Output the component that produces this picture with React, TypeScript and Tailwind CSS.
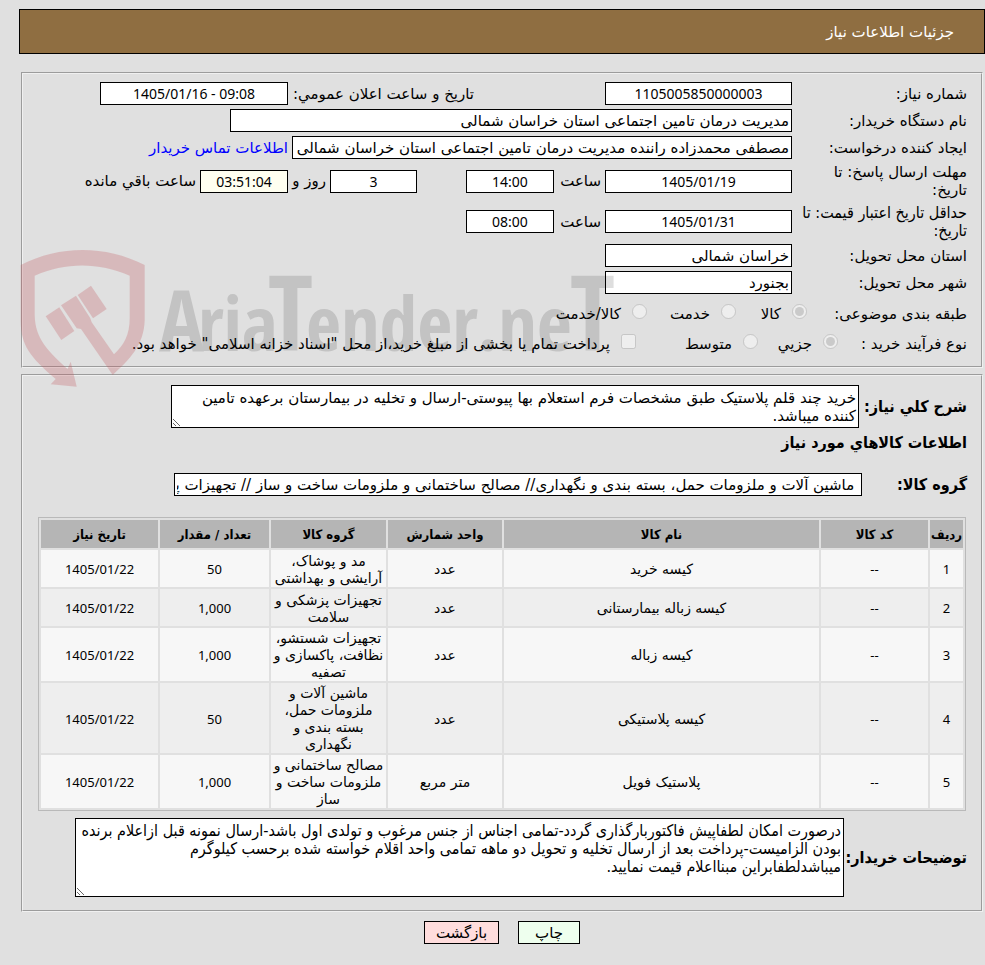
import type { ReactNode } from 'react';

const numeric = "font-['Noto_Sans','DejaVu_Sans',sans-serif] text-[14px] text-center";

type FieldProps = { id: string; label: string; value: string; className: string };

function Box({ id, label, value, className }: FieldProps) {
  return (
    <input
      id={id}
      aria-label={label}
      readOnly
      defaultValue={value}
      className={`h-[23px] shrink-0 border border-black px-[2px] ${className}`}
    />
  );
}

type RowProps = { id: string; label: ReactNode; labelClass?: string; children: ReactNode };

function Row({ id, label, labelClass = '', children }: RowProps) {
  return (
    <div className="flex items-center gap-1">
      <label htmlFor={id} className={`w-[171px] shrink-0 ${labelClass}`}>
        {label}
      </label>
      {children}
    </div>
  );
}

type ChoiceProps = { type: 'radio' | 'checkbox'; name: string; label: string; checked?: boolean; className?: string };

function Choice({ type, name, label, checked, className = '' }: ChoiceProps) {
  return (
    <label className={`flex shrink-0 items-center gap-[11px] whitespace-nowrap ${className}`}>
      <input type={type} name={name} disabled defaultChecked={checked} className="mb-[6px] size-[15px]" />
      {label}
    </label>
  );
}

const items = [
  { name: 'کیسه خرید', unit: 'عدد', group: 'مد و پوشاک، آرایشی و بهداشتی', qty: '50' },
  { name: 'کیسه زباله بیمارستانی', unit: 'عدد', group: 'تجهیزات پزشکی و سلامت', qty: '1,000' },
  { name: 'کیسه زباله', unit: 'عدد', group: 'تجهیزات شستشو، نظافت، پاکسازی و تصفیه', qty: '1,000' },
  { name: 'کیسه پلاستیکی', unit: 'عدد', group: 'ماشین آلات و ملزومات حمل، بسته بندی و نگهداری', qty: '50' },
  { name: 'پلاستیک فویل', unit: 'متر مربع', group: 'مصالح ساختمانی و ملزومات ساخت و ساز', qty: '1,000' },
];

const num = "font-['Noto_Sans','DejaVu_Sans',sans-serif] text-[13px] pt-[2px]";

function Watermark() {
  return (
    <svg
      aria-hidden="true"
      viewBox="0 0 600 142"
      className="pointer-events-none absolute top-[247px] left-[20px] h-[142px] w-[600px] overflow-visible"
    >
      <g fill="#c2575d" fillOpacity="0.28">
        <path d="M0.700 18 C40 -2 85 -2 124.700 18 V73 C124 98 110 112 92.700 128 L61 82 L56.700 81.300 L41 58.300 L56 48.700 L70.300 71.300 L71.700 75.300 L94 107.300 C104 98 109.700 88 109.700 71 V28.700 C78 15 46 15 14.700 28.700 V68 C15 92 29 105 47.500 122 L50.700 114.700 L56.700 139.700 L30.700 137.300 L35.700 132 C10 110 0.700 98 0.700 74 Z" />
        <path d="M25.700 69.300 L39.300 60.300 L54.300 84 L41.300 93 Z" />
        <path d="M57.700 48 L71 38.700 L86.700 62 L73 71.300 Z" />
      </g>
      <text
        y="104"
        direction="ltr"
        opacity="0.13"
        className="font-['Open_Sans_Condensed','Roboto_Condensed','Noto_Sans',sans-serif] text-[76px] font-bold"
      >
        <tspan x="139" className="text-[84px]">A</tspan>
        <tspan x="178">ria</tspan>
        <tspan x="248" className="text-[104px]">T</tspan>
        <tspan x="286">ender.ne</tspan>
        <tspan x="550" className="text-[104px]">T</tspan>
      </text>
    </svg>
  );
}

const panel = 'border-2 border-[#f0f0f0] [border-style:groove] pr-[14px] pl-[15px]';
const area = 'block shrink-0 border border-black bg-white px-[2px] py-[3px] leading-[18px]';
const condensed = "font-['DejaVu_Sans_Condensed','DejaVu_Sans',sans-serif] text-[16px]";
const strong = `${condensed} font-bold whitespace-nowrap shrink-0`;

export default function App() {
  return (
    <div
      dir="rtl"
      className="relative min-h-screen bg-[#e0e0e0] pt-[9px] pl-[19px] font-['DejaVu_Sans',sans-serif] text-[15px] leading-[18px] text-black"
    >
      <header className="flex h-[45px] items-center border border-black bg-[#8f6e41] px-[30px] text-white">
        <h1>جزئیات اطلاعات نیاز</h1>
      </header>

      <main className="mt-[18px] px-[2px]">
        <fieldset className={`${panel} pt-2 pb-[6px]`}>
          <div className="flex flex-col gap-1">
            <Row id="no" label="شماره نیاز:">
              <Box id="no" label="شماره نیاز" value="1105005850000003" className={`w-[187px] bg-white ${numeric}`} />
              <label htmlFor="announce" className="mr-[127px] w-[182px] shrink-0 whitespace-nowrap">
                تاریخ و ساعت اعلان عمومي:
              </label>
              <Box id="announce" label="تاریخ و ساعت اعلان عمومي" value="1405/01/16 - 09:08" className={`w-[188px] bg-white [direction:ltr] ${numeric}`} />
            </Row>
            <Row id="org" label="نام دستگاه خریدار:">
              <Box id="org" label="نام دستگاه خریدار" value="مدیریت درمان تامین اجتماعی استان خراسان شمالی" className="w-[562px] bg-white" />
            </Row>
            <Row id="creator" label="ایجاد کننده درخواست:">
              <Box id="creator" label="ایجاد کننده درخواست" value="مصطفی محمدزاده راننده مدیریت درمان تامین اجتماعی استان خراسان شمالی" className="w-[500px] bg-white" />
              <a href="#contact" className="whitespace-nowrap text-[#0000ff]">
                اطلاعات تماس خریدار
              </a>
            </Row>
            <Row id="deadline" label={<>مهلت ارسال پاسخ: تا<br />تاریخ:</>}>
              <Box id="deadline" label="تاریخ مهلت" value="1405/01/19" className={`w-[187px] bg-white ${numeric}`} />
              <label htmlFor="deadlineTime" className="w-[43px] shrink-0">ساعت</label>
              <Box id="deadlineTime" label="ساعت" value="14:00" className={`w-[88px] bg-white ${numeric}`} />
              <Box id="days" label="روز" value="3" className={`mr-[45px] w-[87px] bg-white ${numeric}`} />
              <label htmlFor="days" className="w-[34px] shrink-0 whitespace-nowrap">روز و</label>
              <Box id="remain" label="ساعت باقي مانده" value="03:51:04" className={`w-[88px] bg-[#fffff0] ${numeric}`} />
              <label htmlFor="remain" className="whitespace-nowrap">ساعت باقي مانده</label>
            </Row>
            <Row id="valid" labelClass={`pt-px whitespace-nowrap ${condensed}`} label={<>حداقل تاریخ اعتبار قیمت: تا<br />تاریخ:</>}>
              <Box id="valid" label="تاریخ اعتبار" value="1405/01/31" className={`w-[187px] bg-white ${numeric}`} />
              <label htmlFor="validTime" className="w-[43px] shrink-0">ساعت</label>
              <Box id="validTime" label="ساعت" value="08:00" className={`w-[88px] bg-white ${numeric}`} />
            </Row>
            <Row id="province" label="استان محل تحویل:">
              <Box id="province" label="استان محل تحویل" value="خراسان شمالی" className="w-[187px] bg-white" />
            </Row>
            <Row id="city" label="شهر محل تحویل:">
              <Box id="city" label="شهر محل تحویل" value="بجنورد" className="w-[187px] bg-white" />
            </Row>
          </div>
          <div role="group" aria-label="طبقه بندی موضوعی" className="mt-[5px] flex h-[30px] items-center">
            <span className="w-[160px] shrink-0">طبقه بندی موضوعی:</span>
            <Choice type="radio" name="kind" label="کالا" checked className="w-[71px]" />
            <Choice type="radio" name="kind" label="خدمت" className="w-[89px]" />
            <Choice type="radio" name="kind" label="کالا/خدمت" />
          </div>
          <div role="group" aria-label="نوع فرآیند خرید" className="mb-px flex h-[30px] items-center">
            <span className="w-[129px] shrink-0">نوع فرآیند خرید :</span>
            <Choice type="radio" name="process" label="جزيي" checked className="w-[80px]" />
            <Choice type="radio" name="process" label="متوسط" className="w-[122px]" />
            <Choice type="checkbox" name="treasury" label={'پرداخت تمام یا بخشی از مبلغ خرید،از محل "اسناد خزانه اسلامی" خواهد بود.'} />
          </div>
        </fieldset>

        <fieldset className={`${panel} mt-[6px] pt-[9px] pb-[13px]`}>
          <div className="flex items-center gap-1">
            <label htmlFor="summary" className={`w-[104px] ${strong}`}>شرح کلي نیاز:</label>
            <textarea
              id="summary"
              readOnly
              className={`${area} h-[43px] w-[688px]`}
              defaultValue="خرید چند قلم پلاستیک طبق مشخصات فرم استعلام بها پیوستی-ارسال و تخلیه در بیمارستان برعهده تامین کننده میباشد."
            />
          </div>
          <h2 className={`mb-[15px] flex h-[30px] items-center ${strong}`}>اطلاعات کالاهاي مورد نیاز</h2>
          <div className="flex items-center gap-1">
            <label htmlFor="group" className={`w-[101px] ${strong}`}>گروه کالا:</label>
            <Box id="group" label="گروه کالا" value=" ماشین آلات و ملزومات حمل، بسته بندی و نگهداری// مصالح ساختمانی و ملزومات ساخت و ساز // تجهیزات پزشکی و سلامت" className="w-[688px] bg-white" />
          </div>
          <div className="mt-[21px] mr-px">
            <table className="w-full table-fixed border-separate border-spacing-[2px] border border-[#b9b9b9] text-center text-[14px] leading-[17px]">
              <colgroup>
                <col className="w-[33px]" />
                <col className="w-[107px]" />
                <col />
                <col className="w-[114px]" />
                <col className="w-[115px]" />
                <col className="w-[109px]" />
                <col className="w-[117px]" />
              </colgroup>
              <thead className="text-[13px]">
                <tr className="h-[28px] bg-[#b5b5b5] font-['DejaVu_Sans_Condensed','DejaVu_Sans',sans-serif]">
                  <th className="whitespace-nowrap">ردیف</th>
                  <th>کد کالا</th>
                  <th>نام کالا</th>
                  <th>واحد شمارش</th>
                  <th>گروه کالا</th>
                  <th>تعداد / مقدار</th>
                  <th>تاریخ نیاز</th>
                </tr>
              </thead>
              <tbody>
                {items.map((item, i) => (
                  <tr key={item.name} className="h-[37px] odd:bg-[#f7f7f7] even:bg-[#eeeeee]">
                    <td className={num}>{i + 1}</td>
                    <td className={num}>--</td>
                    <td className="pt-[2px]">{item.name}</td>
                    <td className="pt-[2px]">{item.unit}</td>
                    <td className="px-px pt-[2px]">{item.group}</td>
                    <td className={num}>{item.qty}</td>
                    <td className={num}>1405/01/22</td>
                  </tr>
                ))}
              </tbody>
            </table>
          </div>
          <div className="mt-[7px] flex items-center gap-1">
            <label htmlFor="notes" className={`w-[119px] ${strong}`}>توضیحات خریدار:</label>
            <textarea
              id="notes"
              readOnly
              className={`${area} ${condensed} h-[79px] w-[769px]`}
              defaultValue={
                'درصورت امکان لطفاپیش فاکتوربارگذاری گردد-تمامی اجناس از جنس مرغوب و تولدی اول باشد-ارسال نمونه قبل ازاعلام برنده بودن الزامیست-پرداخت بعد از ارسال تخلیه و تحویل دو ماهه تمامی واحد اقلام خواسته شده برحسب کیلوگرم\nمیباشدلطفابراین مبنااعلام قیمت نمایید.'
              }
            />
          </div>
        </fieldset>

        <div className="mt-[9px] flex justify-center gap-[19px]">
          <button type="button" className="h-[23px] w-[62px] border border-black bg-[#eeffee]">چاپ</button>
          <button type="button" className="h-[23px] w-[75px] border border-black bg-[#ffdddd]">بازگشت</button>
        </div>
      </main>

      <Watermark />
    </div>
  );
}
